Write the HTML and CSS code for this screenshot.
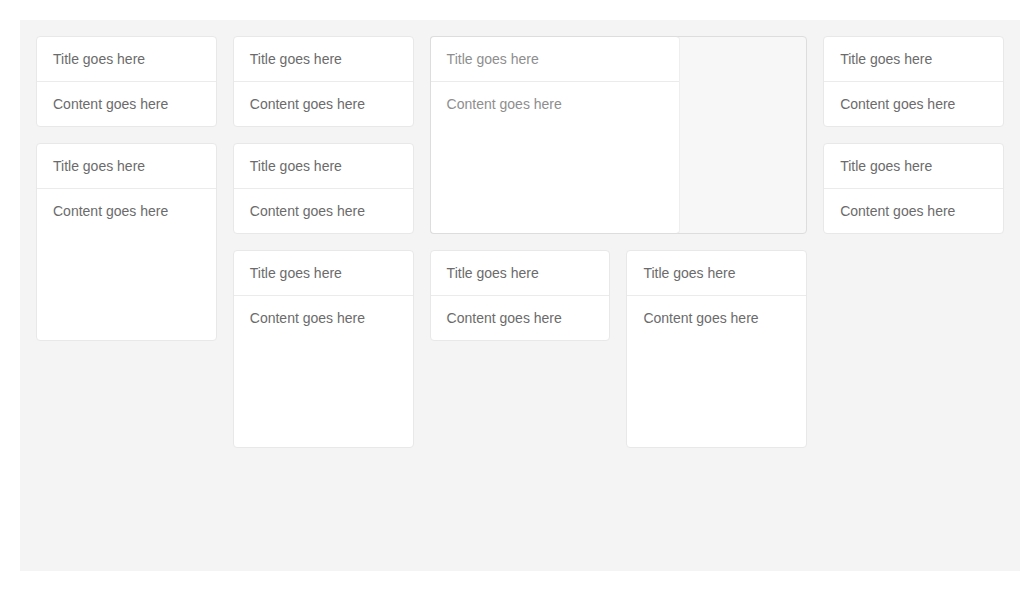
FILE: index.html
```html
<!DOCTYPE html>
<html>
<head>
<meta charset="utf-8">
<link rel="stylesheet" href="styles.css">
</head>
<body>
<div class="board">
  <div class="card c1 r1"><div class="card-title">Title goes here</div><div class="card-body">Content goes here</div></div>
  <div class="card c2 r1"><div class="card-title">Title goes here</div><div class="card-body">Content goes here</div></div>
  <div class="placeholder c3 r1 w2 h2">
    <div class="card resizing"><div class="card-title">Title goes here</div><div class="card-body">Content goes here</div></div>
  </div>
  <div class="card c5 r1"><div class="card-title">Title goes here</div><div class="card-body">Content goes here</div></div>
  <div class="card c1 r2 h2"><div class="card-title">Title goes here</div><div class="card-body">Content goes here</div></div>
  <div class="card c2 r2"><div class="card-title">Title goes here</div><div class="card-body">Content goes here</div></div>
  <div class="card c5 r2"><div class="card-title">Title goes here</div><div class="card-body">Content goes here</div></div>
  <div class="card c2 r3 h2"><div class="card-title">Title goes here</div><div class="card-body">Content goes here</div></div>
  <div class="card c3 r3"><div class="card-title">Title goes here</div><div class="card-body">Content goes here</div></div>
  <div class="card c4 r3 h2"><div class="card-title">Title goes here</div><div class="card-body">Content goes here</div></div>
</div>
</body>
</html>
```
FILE: styles.css
```css
html, body {
  margin: 0;
  padding: 0;
  background: #ffffff;
}
body {
  font-family: "Liberation Sans", Arial, sans-serif;
  font-size: 14px;
  color: #6b6b6b;
}
.board {
  margin: 20px;
  width: 1000px;
  height: 551px;
  box-sizing: border-box;
  padding: 16px;
  background: #f4f4f4;
  display: grid;
  grid-template-columns: repeat(5, 1fr);
  grid-auto-rows: 91px;
  gap: 16px;
}
.c1 { grid-column-start: 1; }
.c2 { grid-column-start: 2; }
.c3 { grid-column-start: 3; }
.c4 { grid-column-start: 4; }
.c5 { grid-column-start: 5; }
.r1 { grid-row-start: 1; }
.r2 { grid-row-start: 2; }
.r3 { grid-row-start: 3; }
.w2 { grid-column-end: span 2; }
.h2 { grid-row-end: span 2; }
.card {
  background: #ffffff;
  border: 1px solid #e8e8e8;
  border-radius: 4px;
  box-sizing: border-box;
  overflow: hidden;
}
.card-title {
  height: 44px;
  line-height: 44px;
  padding: 0 16px;
  border-bottom: 1px solid #ebebeb;
}
.card-body {
  padding: 14px 16px;
  line-height: 16px;
}
.placeholder {
  position: relative;
  background: #f7f7f7;
  border: 1px solid #dddddd;
  border-radius: 4px;
  box-sizing: border-box;
}
.resizing {
  position: absolute;
  top: -1px;
  left: -1px;
  bottom: -1px;
  width: 250px;
  border-color: #dddddd;
  color: #8e8e8e;
  border-right-color: #eeeeee;
}
```
